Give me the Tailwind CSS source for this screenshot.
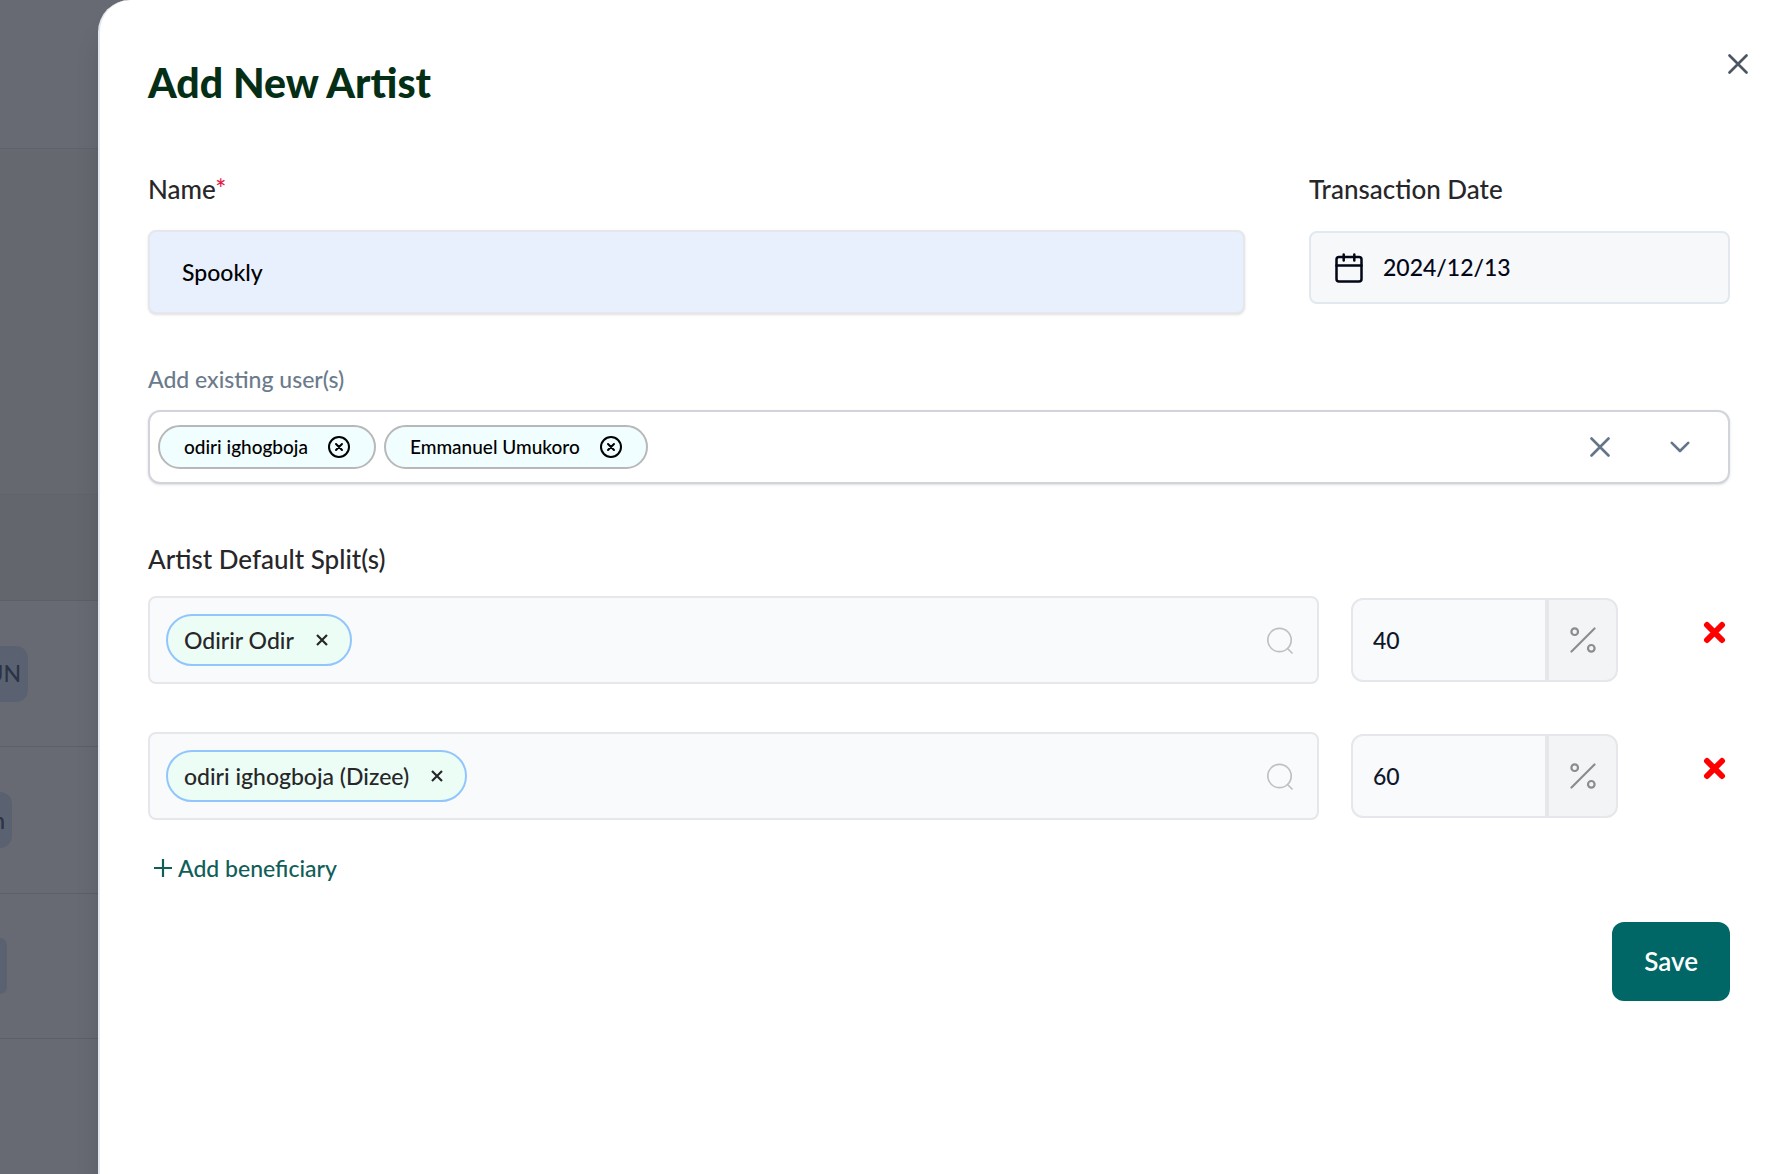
<!DOCTYPE html>
<html lang="en">
<head>
    <meta charset="UTF-8">
    <meta name="viewport" content="width=device-width, initial-scale=1.0">
    <title>Add New Artist</title>
    <script src="https://cdn.jsdelivr.net/npm/@tailwindcss/browser@4"></script>
</head>
<body class="font-[Lato,sans-serif] text-[#27272a] font-medium">
    <div class="flex min-h-screen bg-[#676a72] overflow-hidden">

        <!-- Page behind the drawer -->
        <aside class="w-[98px] shrink-0 bg-[#66686f] text-[23px] text-[#2b3344]" aria-hidden="true">
            <div class="h-[149px] bg-[#676a72] border-b border-[#5f626d]"></div>
            <div class="h-[346px] bg-[#65686f] border-b border-[#62646b]"></div>
            <div class="h-[106px] bg-[#64666e] border-b border-[#5d5f66]"></div>
            <div class="h-[146px] bg-[#676a72] border-b border-[#5d5f66] flex items-center">
                <span class="w-7 h-14 rounded-r-xl bg-[#5a6272] flex items-center justify-end pr-[7px]">UN</span>
            </div>
            <div class="h-[147px] bg-[#676a72] border-b border-[#5d5f66] flex items-center">
                <span class="w-3 h-14 rounded-r-xl bg-[#5a6272] flex items-center justify-end pr-[7px]">n</span>
            </div>
            <div class="h-[145px] bg-[#676a72] border-b border-[#5d5f66] flex items-center">
                <span class="w-[7px] h-14 rounded-r-xl bg-[#5a6272]"></span>
            </div>
            <div class="bg-[#676a72] h-[135px]"></div>
        </aside>

        <main role="dialog" aria-labelledby="title" class="relative flex-1 bg-white border-l-2 border-[#e2e8f0] rounded-tl-[32px] pl-12 pr-12 pt-[55px] shadow-[0_25px_30px_-8px_rgba(0,0,0,0.2)]">
            <button type="button" aria-label="Close" class="absolute top-12 right-6 size-8 flex items-center justify-center text-[#4b5563]">
                <svg width="20" height="20" viewBox="0 0 20 20" fill="none" stroke="currentColor" stroke-width="2.6" stroke-linecap="round"><path d="M1.5 1.5l17 17M18.5 1.5l-17 17"/></svg>
            </button>

            <h1 id="title" class="text-[41px] leading-[56px] font-black text-[#052e16]">Add New Artist</h1>

            <form onsubmit="event.preventDefault()">
                <div class="flex gap-16 mt-[61px]">
                    <div class="flex-1">
                        <label for="name" class="block text-[26px] leading-[34px]">Name<span class="text-[#e11d48]">*</span></label>
                        <input id="name" type="text" value="Spookly" class="mt-6 w-full h-[84px] px-8 rounded-lg border-2 border-[#e5e7eb] bg-[#e8f0fe] text-[23px] text-black shadow-sm">
                    </div>
                    <div class="w-[421px]">
                        <label for="date" class="block text-[26px] leading-[34px]">Transaction Date</label>
                        <div class="mt-[25px] h-[73px] flex items-center gap-5 pl-6 rounded-lg border-2 border-[#e2e8f0] bg-[#f7f8fa] text-[#020617]">
                            <svg class="shrink-0" width="28" height="30" viewBox="0 0 28 30" fill="none" stroke="currentColor" stroke-width="2.5" stroke-linecap="round" stroke-linejoin="round"><rect x="1.5" y="4" width="25" height="24.5" rx="2.5"/><path d="M1.5 12.5h25M8.7 1.5v6M19.3 1.5v6"/></svg>
                            <input id="date" type="text" value="2024/12/13" class="flex-1 min-w-0 bg-transparent text-[23px]">
                        </div>
                    </div>
                </div>

                <label for="users" class="block mt-12 text-[23px] leading-[34px] text-[#6b7b8c]">Add existing user(s)</label>
                <div class="mt-[14px] h-[74px] flex items-center gap-2 pl-2 pr-[38px] rounded-xl border-2 border-[#d1d5db] bg-white shadow-sm text-[19px] text-black">
                    <span class="h-11 flex items-center gap-5 px-6 rounded-full border-2 border-[#b8b8b8] bg-[#f0feff]">odiri ighogboja
                        <button type="button" aria-label="Remove odiri ighogboja"><svg width="22" height="22" viewBox="0 0 22 22" fill="none" stroke="currentColor" stroke-width="2" stroke-linecap="round"><circle cx="11" cy="11" r="10"/><path d="M8 8l6 6M14 8l-6 6"/></svg></button>
                    </span>
                    <span class="h-11 flex items-center gap-5 px-6 rounded-full border-2 border-[#b8b8b8] bg-[#f0feff]">Emmanuel Umukoro
                        <button type="button" aria-label="Remove Emmanuel Umukoro"><svg width="22" height="22" viewBox="0 0 22 22" fill="none" stroke="currentColor" stroke-width="2" stroke-linecap="round"><circle cx="11" cy="11" r="10"/><path d="M8 8l6 6M14 8l-6 6"/></svg></button>
                    </span>
                    <input id="users" type="text" class="flex-1 min-w-0 h-10 outline-none">
                    <button type="button" aria-label="Clear all" class="text-[#64748b]"><svg width="20" height="20" viewBox="0 0 20 20" fill="none" stroke="currentColor" stroke-width="2.6" stroke-linecap="round"><path d="M1.5 1.5l17 17M18.5 1.5l-17 17"/></svg></button>
                    <button type="button" aria-label="Open list" class="ml-[52px] text-[#64748b]"><svg width="20" height="12" viewBox="0 0 20 12" fill="none" stroke="currentColor" stroke-width="2.6" stroke-linecap="round" stroke-linejoin="round"><path d="M1.8 1.8l8.2 8.2 8.2-8.2"/></svg></button>
                </div>

                <h2 class="mt-[58px] text-[26px] leading-[34px]">Artist Default Split(s)</h2>

                <div class="mt-5 flex items-center">
                    <div class="flex-1 h-[88px] flex items-center pl-4 pr-6 rounded-lg border-2 border-[#e5e7eb] bg-[#f9fafc]">
                        <span class="h-[52px] flex items-center gap-[22px] pl-4 pr-[22px] rounded-full border-2 border-[#93c5fd] bg-[#ecfdf5] text-[23px]">Odirir Odir
                            <button type="button" aria-label="Remove Odirir Odir"><svg width="12" height="12" viewBox="0 0 12 12" fill="none" stroke="currentColor" stroke-width="2.2"><path d="M1 1l10 10M11 1L1 11"/></svg></button>
                        </span>
                        <input type="text" aria-label="Search beneficiary" class="flex-1 min-w-0 h-12 outline-none">
                        <svg width="26" height="27" viewBox="0 0 26 27" fill="none" stroke="#c0c0c0" stroke-width="1.7" stroke-linecap="round"><circle cx="12.5" cy="13" r="11.7"/><path d="M20.5 21.5l4.5 4.5"/></svg>
                    </div>
                    <div class="ml-8 flex w-[267px] h-[84px]">
                        <input type="text" value="40" aria-label="Split percent" class="w-[196px] px-5 rounded-l-xl border-2 border-[#e5e7eb] bg-[#f9fafc] text-[23px] text-[#0f172a]">
                        <span class="flex-1 flex items-center justify-center rounded-r-xl border-2 border-[#e5e7eb] bg-[#f3f4f6]">
                            <svg width="26" height="26" viewBox="0 0 26 26" fill="none" stroke="#8c8c8c" stroke-width="2.2" stroke-linecap="round"><path d="M1.5 24.5l23-23"/><circle cx="4.7" cy="4.7" r="3.3"/><circle cx="21.3" cy="21.3" r="3.3"/></svg>
                        </span>
                    </div>
                    <button type="button" aria-label="Remove split" class="ml-[85px] mr-1 pb-4 text-[#ff0000]"><svg width="23" height="23" viewBox="0 0 23 23" fill="none" stroke="currentColor" stroke-width="6" stroke-linecap="round"><path d="M4 4l15 15M19 4L4 19"/></svg></button>
                </div>

                <div class="mt-12 flex items-center">
                    <div class="flex-1 h-[88px] flex items-center pl-4 pr-6 rounded-lg border-2 border-[#e5e7eb] bg-[#f9fafc]">
                        <span class="h-[52px] flex items-center gap-[22px] pl-4 pr-[22px] rounded-full border-2 border-[#93c5fd] bg-[#ecfdf5] text-[23px]">odiri ighogboja (Dizee)
                            <button type="button" aria-label="Remove odiri ighogboja (Dizee)"><svg width="12" height="12" viewBox="0 0 12 12" fill="none" stroke="currentColor" stroke-width="2.2"><path d="M1 1l10 10M11 1L1 11"/></svg></button>
                        </span>
                        <input type="text" aria-label="Search beneficiary" class="flex-1 min-w-0 h-12 outline-none">
                        <svg width="26" height="27" viewBox="0 0 26 27" fill="none" stroke="#c0c0c0" stroke-width="1.7" stroke-linecap="round"><circle cx="12.5" cy="13" r="11.7"/><path d="M20.5 21.5l4.5 4.5"/></svg>
                    </div>
                    <div class="ml-8 flex w-[267px] h-[84px]">
                        <input type="text" value="60" aria-label="Split percent" class="w-[196px] px-5 rounded-l-xl border-2 border-[#e5e7eb] bg-[#f9fafc] text-[23px] text-[#0f172a]">
                        <span class="flex-1 flex items-center justify-center rounded-r-xl border-2 border-[#e5e7eb] bg-[#f3f4f6]">
                            <svg width="26" height="26" viewBox="0 0 26 26" fill="none" stroke="#8c8c8c" stroke-width="2.2" stroke-linecap="round"><path d="M1.5 24.5l23-23"/><circle cx="4.7" cy="4.7" r="3.3"/><circle cx="21.3" cy="21.3" r="3.3"/></svg>
                        </span>
                    </div>
                    <button type="button" aria-label="Remove split" class="ml-[85px] mr-1 pb-4 text-[#ff0000]"><svg width="23" height="23" viewBox="0 0 23 23" fill="none" stroke="currentColor" stroke-width="6" stroke-linecap="round"><path d="M4 4l15 15M19 4L4 19"/></svg></button>
                </div>

                <button type="button" class="mt-8 ml-[6px] h-8 flex items-center gap-[6px] text-[23px] text-[#115e59]">
                    <svg width="18" height="18" viewBox="0 0 18 18" fill="none" stroke="currentColor" stroke-width="2.2"><path d="M0 9h18M9 0v18"/></svg>
                    Add beneficiary
                </button>

                <div class="mt-[38px] flex justify-end">
                    <button type="submit" class="h-[79px] px-8 rounded-xl bg-[#006666] text-[26px] text-white font-semibold">Save</button>
                </div>
            </form>
        </main>
    </div>
</body>
</html>
